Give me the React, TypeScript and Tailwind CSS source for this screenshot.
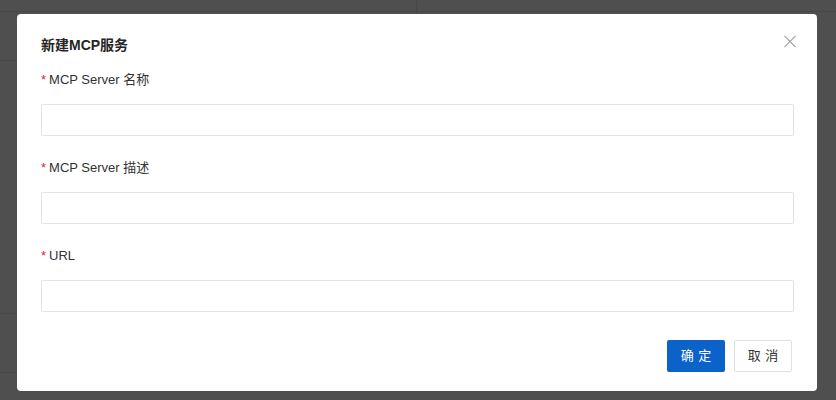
import React from "react";

const font = { fontFamily: '"Liberation Sans", "Noto Sans CJK SC", sans-serif' };

function Field({ label }: { label: string }) {
  return (
    <div className="flex flex-col">
      <div className="flex h-[20px] items-center text-[13px] text-[#333333]">
        <span className="mr-[3px] text-[#e0282e]">*</span>
        <span>{label}</span>
      </div>
      <input
        className="mt-[14px] h-[32px] w-full rounded-[2px] border border-[#e3e3e3] bg-white px-2 text-[13px] outline-none"
        style={font}
      />
    </div>
  );
}

export default function App() {
  return (
    <div className="relative h-[400px] w-[836px] overflow-hidden bg-[#4f4f4f]" style={font}>
      {/* faint page content under the mask */}
      <div className="absolute left-0 top-[11px] h-px w-full bg-[#474747]" />
      <div className="absolute left-[416px] top-0 h-[14px] w-px bg-[#474747]" />
      <div className="absolute left-0 top-[60px] h-px w-[17px] bg-[#474747]" />
      <div className="absolute left-0 top-[313px] h-px w-[17px] bg-[#474747]" />
      <div className="absolute left-0 top-[372px] h-px w-[17px] bg-[#474747]" />

      <div className="relative pl-[17px] pt-[14px]">
        <div className="relative flex h-[377px] w-[800px] flex-col rounded-[4px] bg-white pl-6 pr-[23px] pt-[20px]">
          <button className="absolute right-[21px] top-[21px] flex h-[12px] w-[12px] items-center justify-center">
            <svg width="13" height="13" viewBox="0 0 13 13">
              <path d="M0.5 0.5 L12.5 12.5 M12.5 0.5 L0.5 12.5" stroke="#9a9a9a" strokeWidth="1.1" />
            </svg>
          </button>
          <div className="h-[22px] text-[14px] font-semibold leading-[22px] text-[#262626]">新建MCP服务</div>
          <div className="mt-[14px] flex flex-col gap-[22px]">
            <Field label="MCP Server 名称" />
            <Field label="MCP Server 描述" />
            <Field label="URL" />
          </div>
          <div className="mt-[28px] flex justify-end gap-[9px] pr-[2px]">
            <button className="flex h-[32px] w-[58px] items-center justify-center rounded-[2px] bg-[#0b62c8] text-[13px] text-white">
              <span className="mr-[-0.34em] tracking-[0.34em]">确定</span>
            </button>
            <button className="flex h-[32px] w-[58px] items-center justify-center rounded-[2px] border border-[#e0e0e0] bg-white text-[13px] text-[#333333]">
              <span className="mr-[-0.34em] tracking-[0.34em]">取消</span>
            </button>
          </div>
        </div>
      </div>
    </div>
  );
}
